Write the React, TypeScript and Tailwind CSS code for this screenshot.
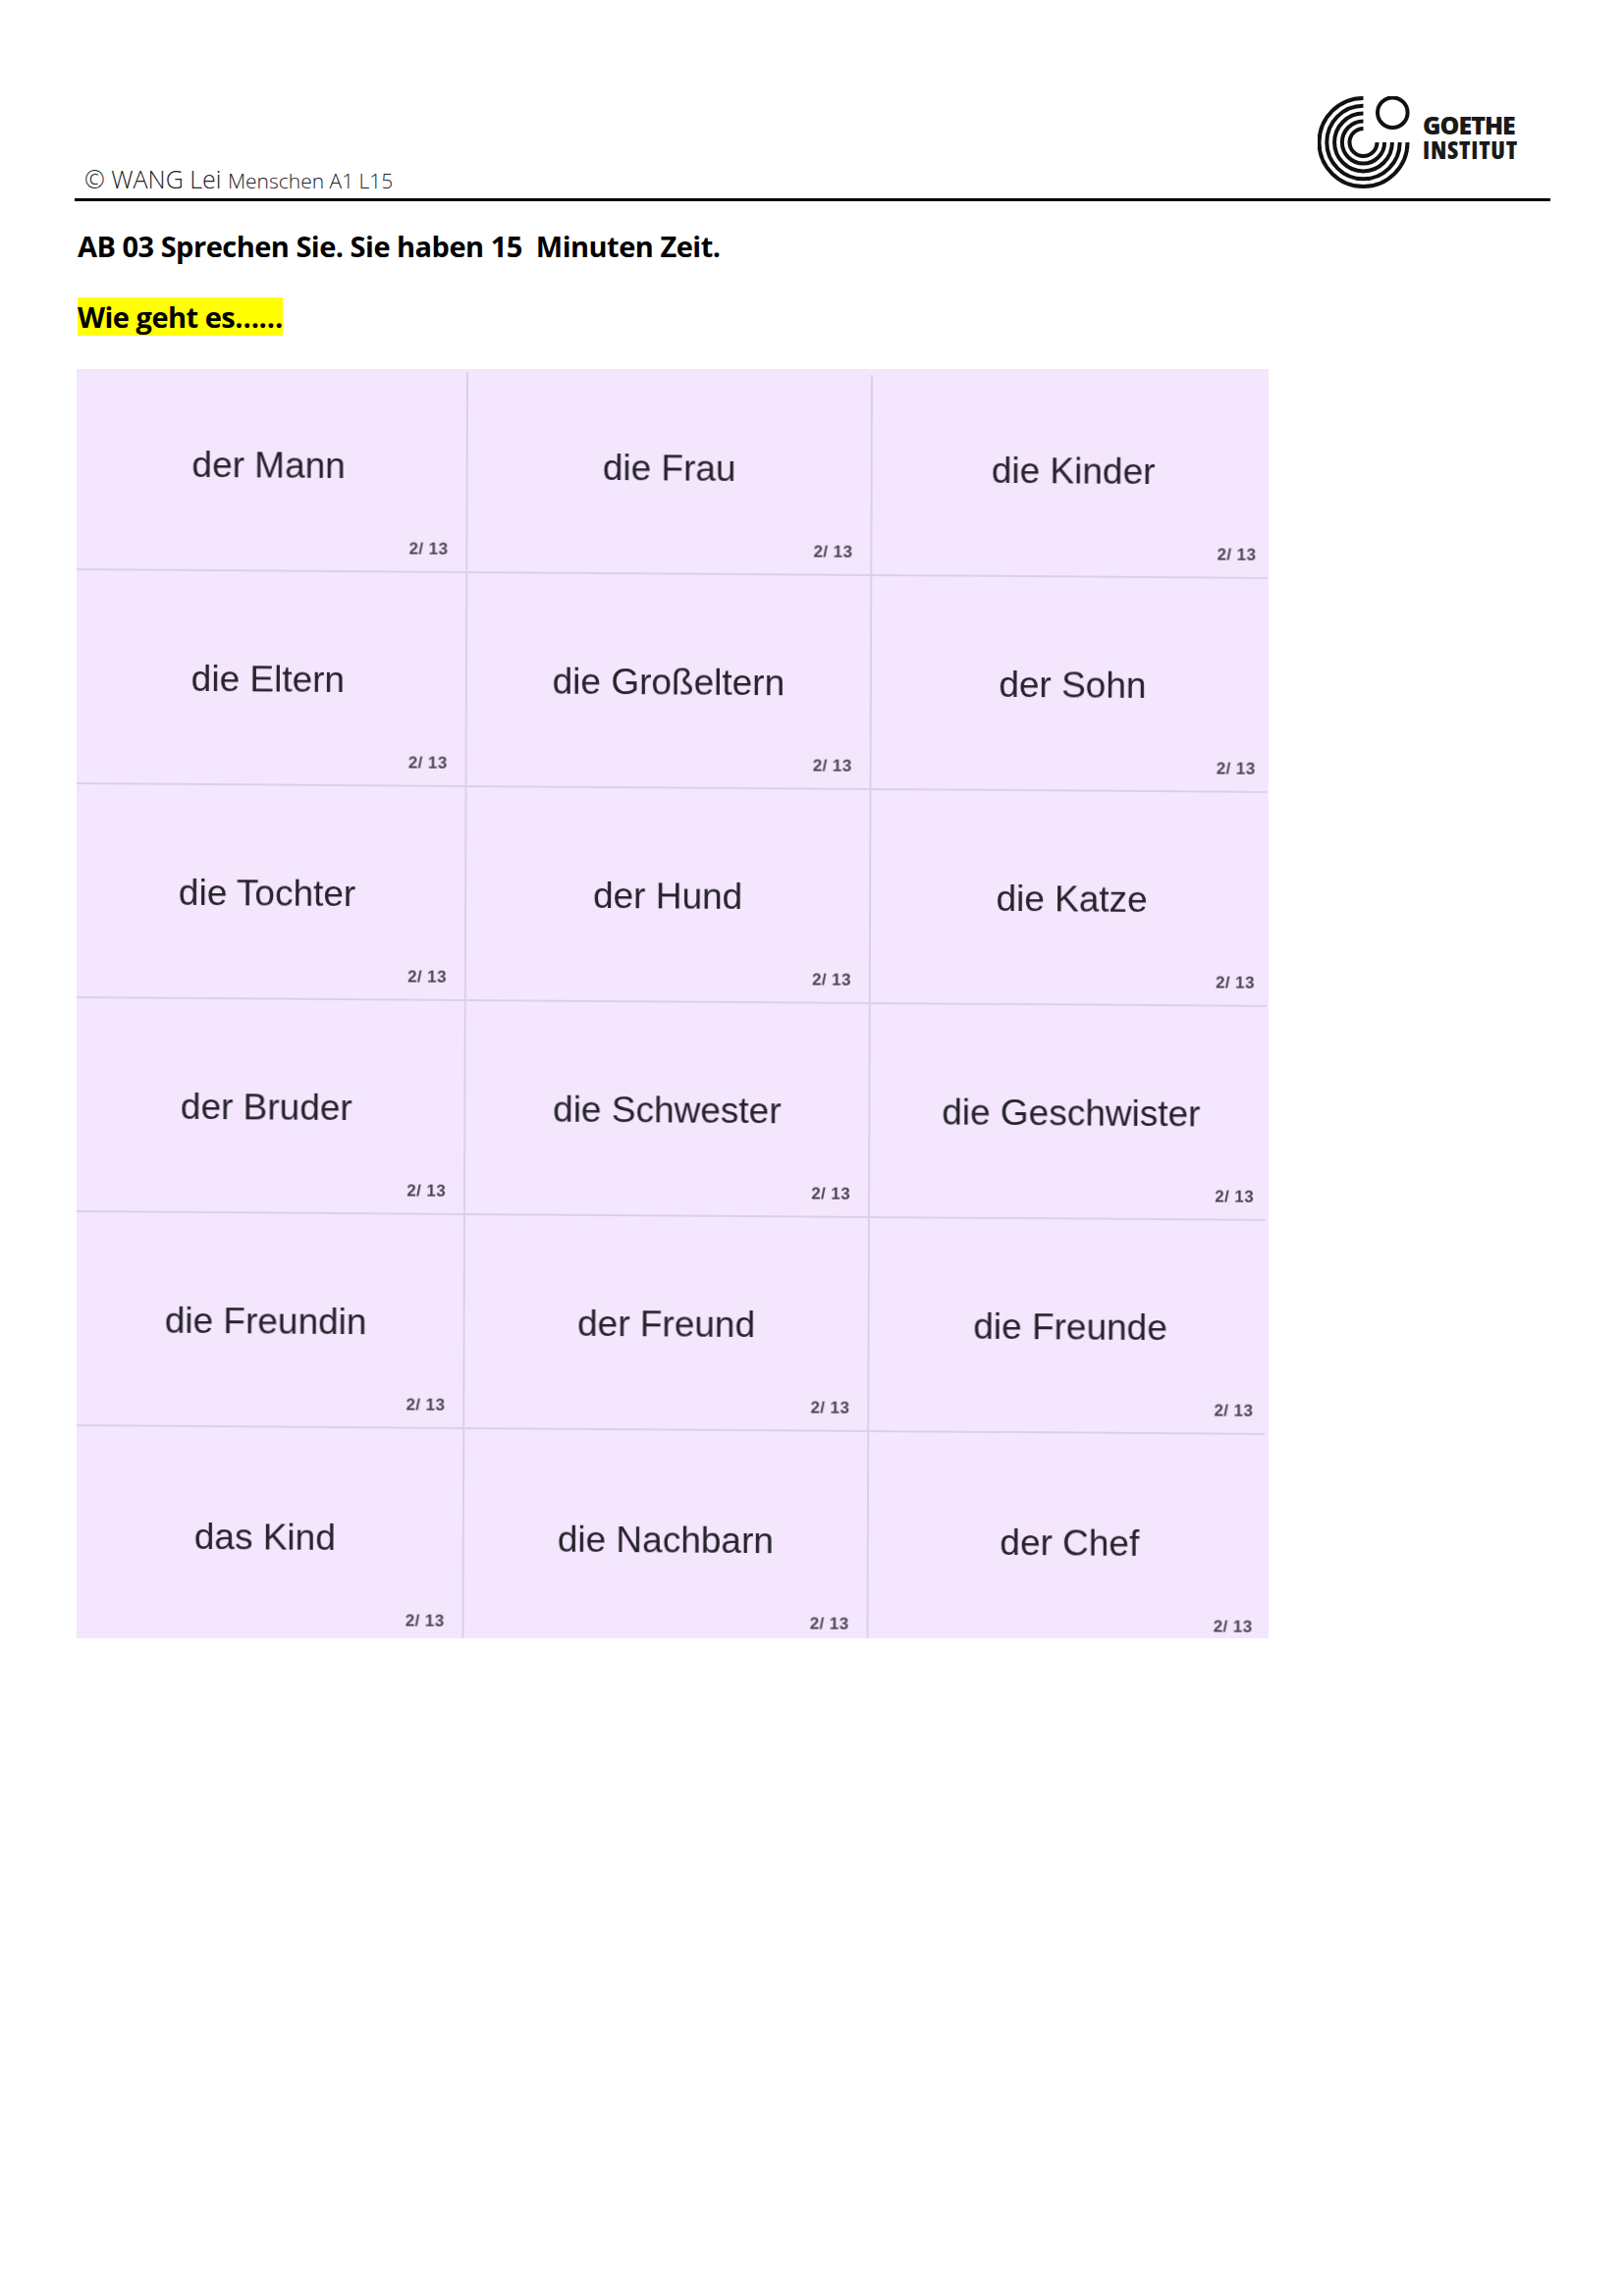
const cells = [
  "der Mann", "die Frau", "die Kinder",
  "die Eltern", "die Großeltern", "der Sohn",
  "die Tochter", "der Hund", "die Katze",
  "der Bruder", "die Schwester", "die Geschwister",
  "die Freundin", "der Freund", "die Freunde",
  "das Kind", "die Nachbarn", "der Chef",
];

function Logo() {
  const radii = [45, 37.2, 29.4, 21.6, 14];
  return (
    <div className="flex items-start gap-[11px]">
      <svg width="96" height="95" viewBox="0 0 96 95" className="block">
        {radii.map((r) => (
          <path
            key={r}
            d={`M 46.5 ${47 - r} A ${r} ${r} 0 1 0 ${46.5 + r} 47`}
            fill="none"
            stroke="#111"
            strokeWidth="4"
          />
        ))}
        <circle cx="76.3" cy="16.7" r="15.3" fill="none" stroke="#111" strokeWidth="4" />
      </svg>
      <div className="mt-[17px] w-[94px] whitespace-nowrap font-['Open_Sans',sans-serif] text-[25px] font-extrabold leading-[25px] text-[#1a1a1a]">
        <div className="tracking-[-1px]">GOETHE</div>
        <div className="tracking-[0.7px] [font-stretch:75%]">INSTITUT</div>
      </div>
    </div>
  );
}

export default function App() {
  return (
    <div className="min-h-[2339px] bg-white pt-[98px] pl-[76px] pr-[75px] font-['Open_Sans',sans-serif] text-black">
      <header className="flex h-[107px] items-end justify-between border-b-[3px] border-black pr-[36px]">
        <p className="mb-[1px] pl-[10px] text-[25px] font-light leading-[34px] text-[#222]">
          © WANG Lei <span className="text-[21px]">Menschen A1 L15</span>
        </p>
        <div className="self-start">
          <Logo />
        </div>
      </header>
      <div className="pl-[2px]">
        <h1 className="mt-[26px] ml-[1px] whitespace-pre text-[29px] font-bold leading-[40px] tracking-[-0.51px]">
          AB 03 Sprechen Sie. Sie haben 15  Minuten Zeit.
        </h1>
        <p className="mt-[32px] ml-[1px] h-[39px] w-fit bg-[#ffff00] text-[29px] font-bold leading-[39px] tracking-[-0.51px]">
          Wie geht es……
        </p>
        <div className="mt-[34px] h-[1293px] w-[1214px] overflow-hidden bg-[#f3e6fd]">
          <div className="grid origin-top-left grid-cols-[399px_412px_403px] grid-rows-[205px_repeat(5,218px)] [transform:matrix(1,0.0073,-0.0035,1,0,0)]">
            {cells.map((label, i) => (
              <div
                key={label}
                className={`flex flex-col items-center justify-end pb-[13px] ${i < 15 ? "border-b-2 border-[#dccfe8]" : ""} ${i % 3 < 2 ? "border-r-2 border-[#dccfe8]" : ""}`}
              >
                <div className={`mb-[55px] h-[40px] font-['Liberation_Sans',sans-serif] text-[37px] leading-[40px] text-[#26232c] blur-[0.6px] ${i % 3 === 0 ? "mr-[5px]" : ""} ${i % 3 === 2 ? "ml-[6px]" : ""}`}>
                  {label}
                </div>
                <div className={`self-end font-['Liberation_Sans',sans-serif] text-[17px] font-bold leading-[18px] tracking-[0.4px] text-[#4a4650] blur-[0.5px] ${i % 3 === 2 ? "mr-[12px]" : "mr-[18px]"}`}>
                  2/ 13
                </div>
              </div>
            ))}
          </div>
        </div>
      </div>
    </div>
  );
}
